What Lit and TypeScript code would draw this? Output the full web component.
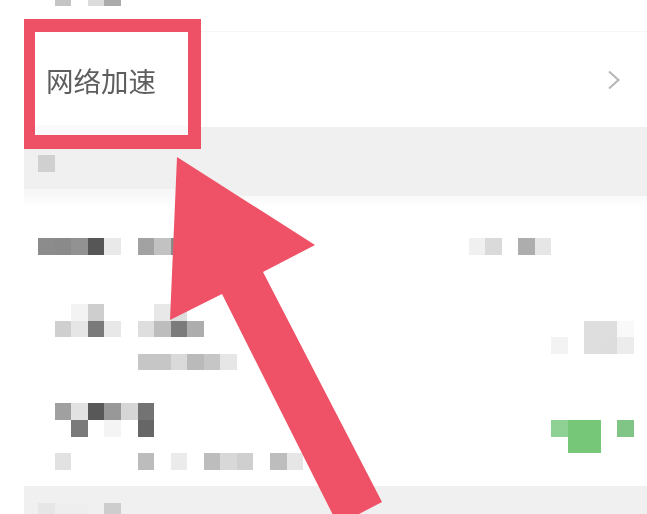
import { LitElement, html, css, svg } from "lit";
import { customElement } from "lit/decorators.js";

type Cell = [number, number, string];

const TOP: Cell[] = [[0, 1, "#c4c4c4"], [0, 3, "#dcdcdc"], [0, 4, "#ababab"]];
const BAND: Cell[] = [[0, 0, "#d0d0d0"]];
const LIST: Cell[] = [
  [0, 0, "#8c8c8c"], [0, 1, "#8a8a8a"], [0, 2, "#929292"], [0, 3, "#565656"], [0, 4, "#e9e9e9"],
  [0, 6, "#a2a2a2"], [0, 7, "#c2c2c2"], [0, 8, "#8a8a8a"],
  [0, 26, "#f0f0f0"], [0, 27, "#dadada"], [0, 29, "#adadad"], [0, 30, "#e6e6e6"],
  [4, 2, "#f3f3f3"], [4, 3, "#cecece"], [4, 7, "#e8e8e8"], [4, 8, "#dedede"],
  [5, 1, "#cfcfcf"], [5, 2, "#e6e6e6"], [5, 3, "#7a7a7a"], [5, 4, "#e8e8e8"],
  [5, 6, "#dedede"], [5, 7, "#bdbdbd"], [5, 8, "#7b7b7b"], [5, 9, "#adadad"],
  [5, 33, "#dedede"], [5, 34, "#dedede"], [5, 35, "#f9f9f9"],
  [6, 31, "#f3f3f3"], [6, 33, "#dedede"], [6, 34, "#dddddd"], [6, 35, "#ececec"],
  [7, 6, "#c6c6c6"], [7, 7, "#c6c6c6"], [7, 8, "#dadada"], [7, 9, "#bababa"], [7, 10, "#c6c6c6"], [7, 11, "#e6e6e6"],
  [10, 1, "#a0a0a0"], [10, 2, "#e2e2e2"], [10, 3, "#585858"], [10, 4, "#989898"], [10, 5, "#d6d6d6"], [10, 6, "#737373"],
  [11, 2, "#7a7a7a"], [11, 4, "#f4f4f4"], [11, 6, "#666666"],
  [11, 31, "#8fd095"], [11, 32, "#76c878"], [11, 33, "#76c878"], [11, 35, "#80c585"],
  [12, 32, "#76c878"], [12, 33, "#76c878"],
  [13, 1, "#e2e2e2"], [13, 6, "#bcbcbc"], [13, 8, "#ebebeb"], [13, 10, "#bdbdbd"], [13, 11, "#d8d8d8"], [13, 12, "#cfcfcf"],
  [13, 14, "#bdbdbd"], [13, 15, "#e6e6e6"],
];
const FOOT: Cell[] = [[0, 0, "#e6e6e6"], [0, 1, "#eeeeee"], [0, 2, "#eeeeee"], [0, 4, "#cdcdcd"]];

@customElement("app-root")
export class AppRoot extends LitElement {
  static styles = css`
    :host {
      display: block;
      position: relative;
      width: 647px;
      height: 514px;
      overflow: hidden;
      background: #fff;
    }
    .page {
      display: flex;
      flex-direction: column;
      height: 100%;
      padding-left: 24px;
      box-sizing: border-box;
    }
    .mosaic {
      display: grid;
      grid-template-columns: repeat(37, 16.56px);
      grid-auto-rows: 16.56px;
      margin-left: 14.3px;
      filter: blur(0.5px);
    }
    .top {
      height: 31px;
      flex: none;
      border-bottom: 1px solid #f7f7f7;
    }
    .top .mosaic {
      grid-auto-rows: 6px;
    }
    .setting {
      height: 95px;
      flex: none;
      display: flex;
      align-items: center;
      justify-content: space-between;
      padding: 0 26px 0 22px;
      box-sizing: border-box;
    }
    .label {
      font-family: "Noto Sans CJK SC", "Liberation Sans", sans-serif;
      font-size: 27.5px;
      line-height: 1;
      color: #5e5e5e;
      filter: blur(0.7px);
      position: relative;
      top: 1px;
    }
    .chev {
      width: 14px;
      height: 20px;
      display: block;
      filter: blur(0.6px);
    }
    .band {
      height: 69px;
      flex: none;
      padding-top: 28px;
      box-sizing: border-box;
      background:
        linear-gradient(#f8f8f8, #f8f8f8) left bottom / 160px 7px no-repeat,
        #f0f0f0;
    }
    .list {
      flex: 1;
      padding-top: 42px;
      box-sizing: border-box;
      background: linear-gradient(#f9f9f9, #fff 12px);
    }
    .foot {
      height: 28px;
      flex: none;
      padding-top: 17px;
      box-sizing: border-box;
      background: #f0f0f0;
    }
    .overlay {
      position: absolute;
      inset: 0;
      width: 647px;
      height: 514px;
      display: block;
      filter: blur(0.35px);
    }
  `;

  private mosaic(cells: Cell[]) {
    return html`<div class="mosaic">
      ${cells.map(
        ([r, c, col]) =>
          html`<div style="grid-row:${r + 1};grid-column:${c + 1};background:${col}"></div>`
      )}
    </div>`;
  }

  render() {
    return html`
      <div class="page">
        <div class="top">${this.mosaic(TOP)}</div>
        <div class="setting">
          <span class="label">网络加速</span>
          <svg class="chev" viewBox="0 0 14 20" fill="none">
            <path d="M2 1.5 L11.5 10 L2 18.5" stroke="#b8b8b8" stroke-width="2.2" />
          </svg>
        </div>
        <div class="band">${this.mosaic(BAND)}</div>
        <div class="list">${this.mosaic(LIST)}</div>
        <div class="foot">${this.mosaic(FOOT)}</div>
      </div>
      <svg class="overlay" viewBox="0 0 647 514">
        ${svg`
          <rect x="35" y="125" width="153" height="10" fill="#fafafa" />
          <path fill="#ee5166" fill-rule="evenodd"
            d="M24 19 H201 V149 H24 Z M35 32 V135 H188 V32 Z" />
          <path fill="#ef5266"
            d="M177 157 L315 245 L263 272 L382 502 L338 525 L222 294 L170 320 Z" />
        `}
      </svg>
    `;
  }
}
